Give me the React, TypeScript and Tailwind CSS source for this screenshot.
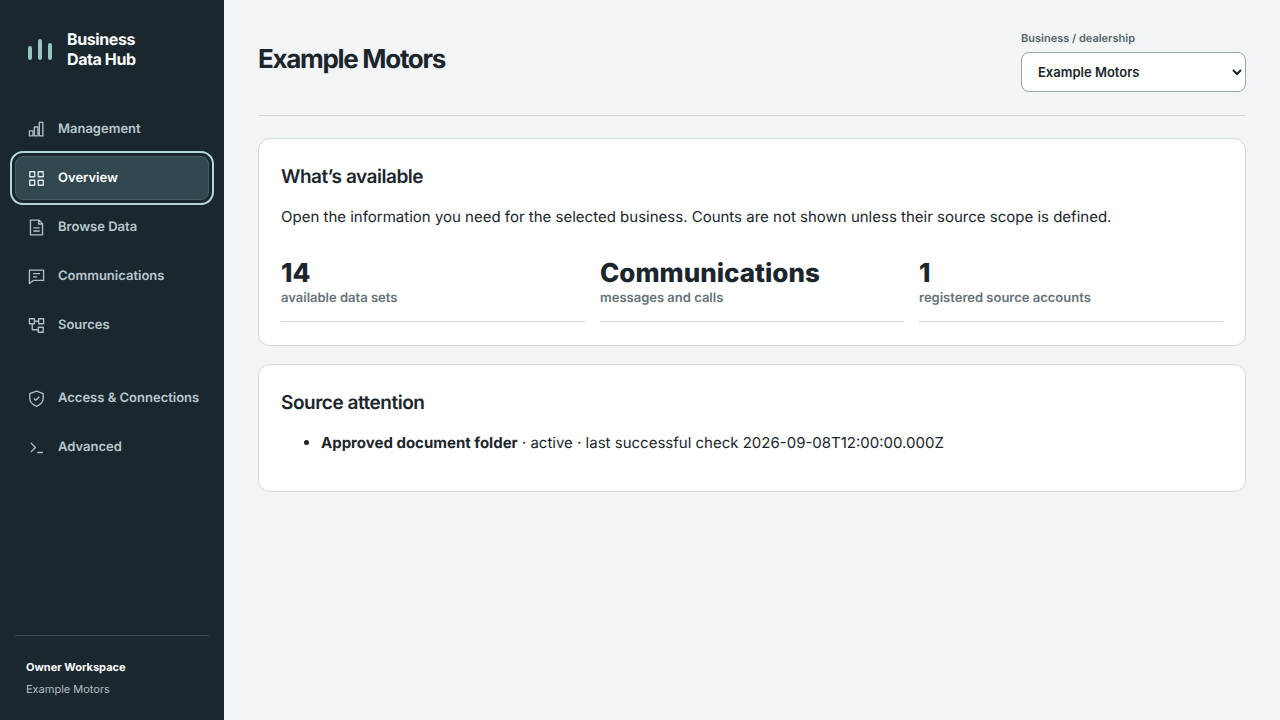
import { useState, type ReactNode } from 'react';
import clsx from 'clsx';

type NavItem = { id: string; label: string; icon: ReactNode };

const mainNav: NavItem[] = [
  {
    id: 'management',
    label: 'Management',
    icon: (
      <>
        <rect x="2" y="14" width="5" height="7" />
        <rect x="9" y="8.5" width="5" height="12.5" />
        <rect x="16" y="2" width="5" height="19" />
      </>
    ),
  },
  {
    id: 'overview',
    label: 'Overview',
    icon: (
      <>
        <rect x="2.5" y="2.5" width="7" height="7" />
        <rect x="14.5" y="2.5" width="7" height="7" />
        <rect x="2.5" y="14.5" width="7" height="7" />
        <rect x="14.5" y="14.5" width="7" height="7" />
      </>
    ),
  },
  {
    id: 'browse',
    label: 'Browse Data',
    icon: <path d="M3.5 1.5h12l5 5v16h-17zM15 1.5V7h5.5M7.5 12.5h9M7.5 17h9" />,
  },
  {
    id: 'communications',
    label: 'Communications',
    icon: <path d="M2 3h20v14.5H7.500L2 22zM7 8h10M7 12.5h6" />,
  },
  {
    id: 'sources',
    label: 'Sources',
    icon: (
      <>
        <rect x="2" y="2.5" width="7" height="7" />
        <rect x="15" y="2.5" width="7" height="7" />
        <rect x="14.5" y="14.5" width="7" height="7" />
        <path d="M9 6h6M6 9.5V18h8.5" />
      </>
    ),
  },
];

const adminNav: NavItem[] = [
  {
    id: 'access',
    label: 'Access & Connections',
    icon: <path d="M12 1.5l9.5 3.5v7c0 5.500-4 8.500-9.500 11-5.500-2.500-9.500-5.500-9.500-11V5zM8.500 12l2.500 2.500 5-5" />,
  },
  {
    id: 'advanced',
    label: 'Advanced',
    icon: <path d="M4 5.500l6.500 6.500L4 18.500M13 19h8" />,
  },
];

const stats = [
  { value: '14', label: 'available data sets' },
  { value: 'Communications', label: 'messages and calls' },
  { value: '1', label: 'registered source accounts' },
];

function NavLink({ item, active, onSelect }: { item: NavItem; active: boolean; onSelect: (id: string) => void }) {
  return (
    <a
      href={`#${item.id}`}
      onClick={() => onSelect(item.id)}
      aria-current={active ? 'page' : undefined}
      className={clsx(
        'flex h-11 items-center gap-[13px] rounded-lg border px-3 text-[13px] leading-5 font-semibold whitespace-nowrap',
        active
          ? 'border-[#465d64] bg-[#31484f] text-white outline-2 outline-offset-3 outline-[#b4d8d8]'
          : 'border-transparent text-[#b9c8ce] hover:text-white'
      )}
    >
      <svg
        viewBox="0 0 24 24"
        className={clsx('size-[17px] shrink-0', active ? 'text-[#dce8ea]' : 'text-[#b0bfc5]')}
        fill="none"
        stroke="currentColor"
        strokeWidth="1.9"
        strokeLinejoin="round"
        aria-hidden="true"
      >
        {item.icon}
      </svg>
      {item.label}
    </a>
  );
}

function Card({ title, children }: { title: string; children: ReactNode }) {
  return (
    <section className="rounded-xl border border-[#d3dadd] bg-white px-[22px] pt-6 pb-[23px]">
      <h2 className="text-[19px] leading-7 font-semibold tracking-tight">{title}</h2>
      {children}
    </section>
  );
}

export default function App() {
  const [page, setPage] = useState('overview');
  const [business, setBusiness] = useState('Example Motors');

  return (
    <div className="flex min-h-screen bg-[#f2f4f6] font-['Inter',sans-serif] text-[15px] text-[#1b262c] antialiased [text-rendering:geometricPrecision]">
      {/* Sidebar */}
      <aside className="flex w-56 shrink-0 flex-col bg-[#1b272e] px-[15px] pt-[29px] pb-5">
        <div className="flex items-center gap-[14px] px-3">
          <svg viewBox="0 0 26 26" className="size-[26px]" fill="#91c7bf" aria-hidden="true">
            <rect x="1" y="10" width="4" height="14" rx="2" />
            <rect x="11" y="3" width="4" height="21" rx="2" />
            <rect x="21" y="7" width="4" height="17" rx="2" />
          </svg>
          <div className="text-base leading-5 font-bold tracking-tight text-white">
            Business
            <br />
            Data Hub
          </div>
        </div>

        <nav aria-label="Primary" className="mt-[38px] flex flex-col gap-[5px]">
          {mainNav.map((item) => (
            <NavLink key={item.id} item={item} active={page === item.id} onSelect={setPage} />
          ))}
        </nav>
        <nav aria-label="Administration" className="mt-[29px] flex flex-col gap-[5px]">
          {adminNav.map((item) => (
            <NavLink key={item.id} item={item} active={page === item.id} onSelect={setPage} />
          ))}
        </nav>

        <div className="mt-auto border-t border-[#3a4951] px-[11px] pt-5 text-[11px] leading-[22px]">
          <div className="font-bold text-white">Owner Workspace</div>
          <div className="text-[#b0bfc5]">{business}</div>
        </div>
      </aside>

      {/* Content */}
      <main className="min-w-0 flex-1 px-[34px] pt-[30px] pb-8">
        <header className="flex items-start justify-between gap-6 border-b border-[#d3dadd] pb-[23px]">
          <h1 className="pt-3 text-[26px] leading-9 font-bold tracking-tighter">{business}</h1>
          <div className="flex w-[225px] flex-col gap-[6px]">
            <label htmlFor="business" className="text-[11px] leading-4 font-semibold text-[#58666c]">
              Business / dealership
            </label>
            <select
              id="business"
              value={business}
              onChange={(e) => setBusiness(e.target.value)}
              className="h-10 rounded-lg border border-[#9aa6ab] bg-white px-3 text-[13px] font-semibold"
            >
              <option>Example Motors</option>
            </select>
          </div>
        </header>

        <div className="mt-[22px] flex flex-col gap-[18px]">
          <Card title="What’s available">
            <p className="mt-[14px] leading-6">
              Open the information you need for the selected business. Counts are not shown unless their source scope is
              defined.
            </p>
            <div className="mt-[31px] grid grid-cols-3 gap-[15px]">
              {stats.map((s) => (
                <div key={s.label} className="border-b border-[#d3dadd] pb-[13px]">
                  <div className="text-[26px] leading-7 font-extrabold">{s.value}</div>
                  <div className="text-[13px] leading-5 font-semibold text-[#66737a]">{s.label}</div>
                </div>
              ))}
            </div>
          </Card>

          <Card title="Source attention">
            <ul className="mt-[14px] mb-[13px] list-disc pl-10 leading-6">
              <li>
                <strong>Approved document folder</strong> · active · last successful check 2026-09-08T12:00:00.000Z
              </li>
            </ul>
          </Card>
        </div>
      </main>
    </div>
  );
}
